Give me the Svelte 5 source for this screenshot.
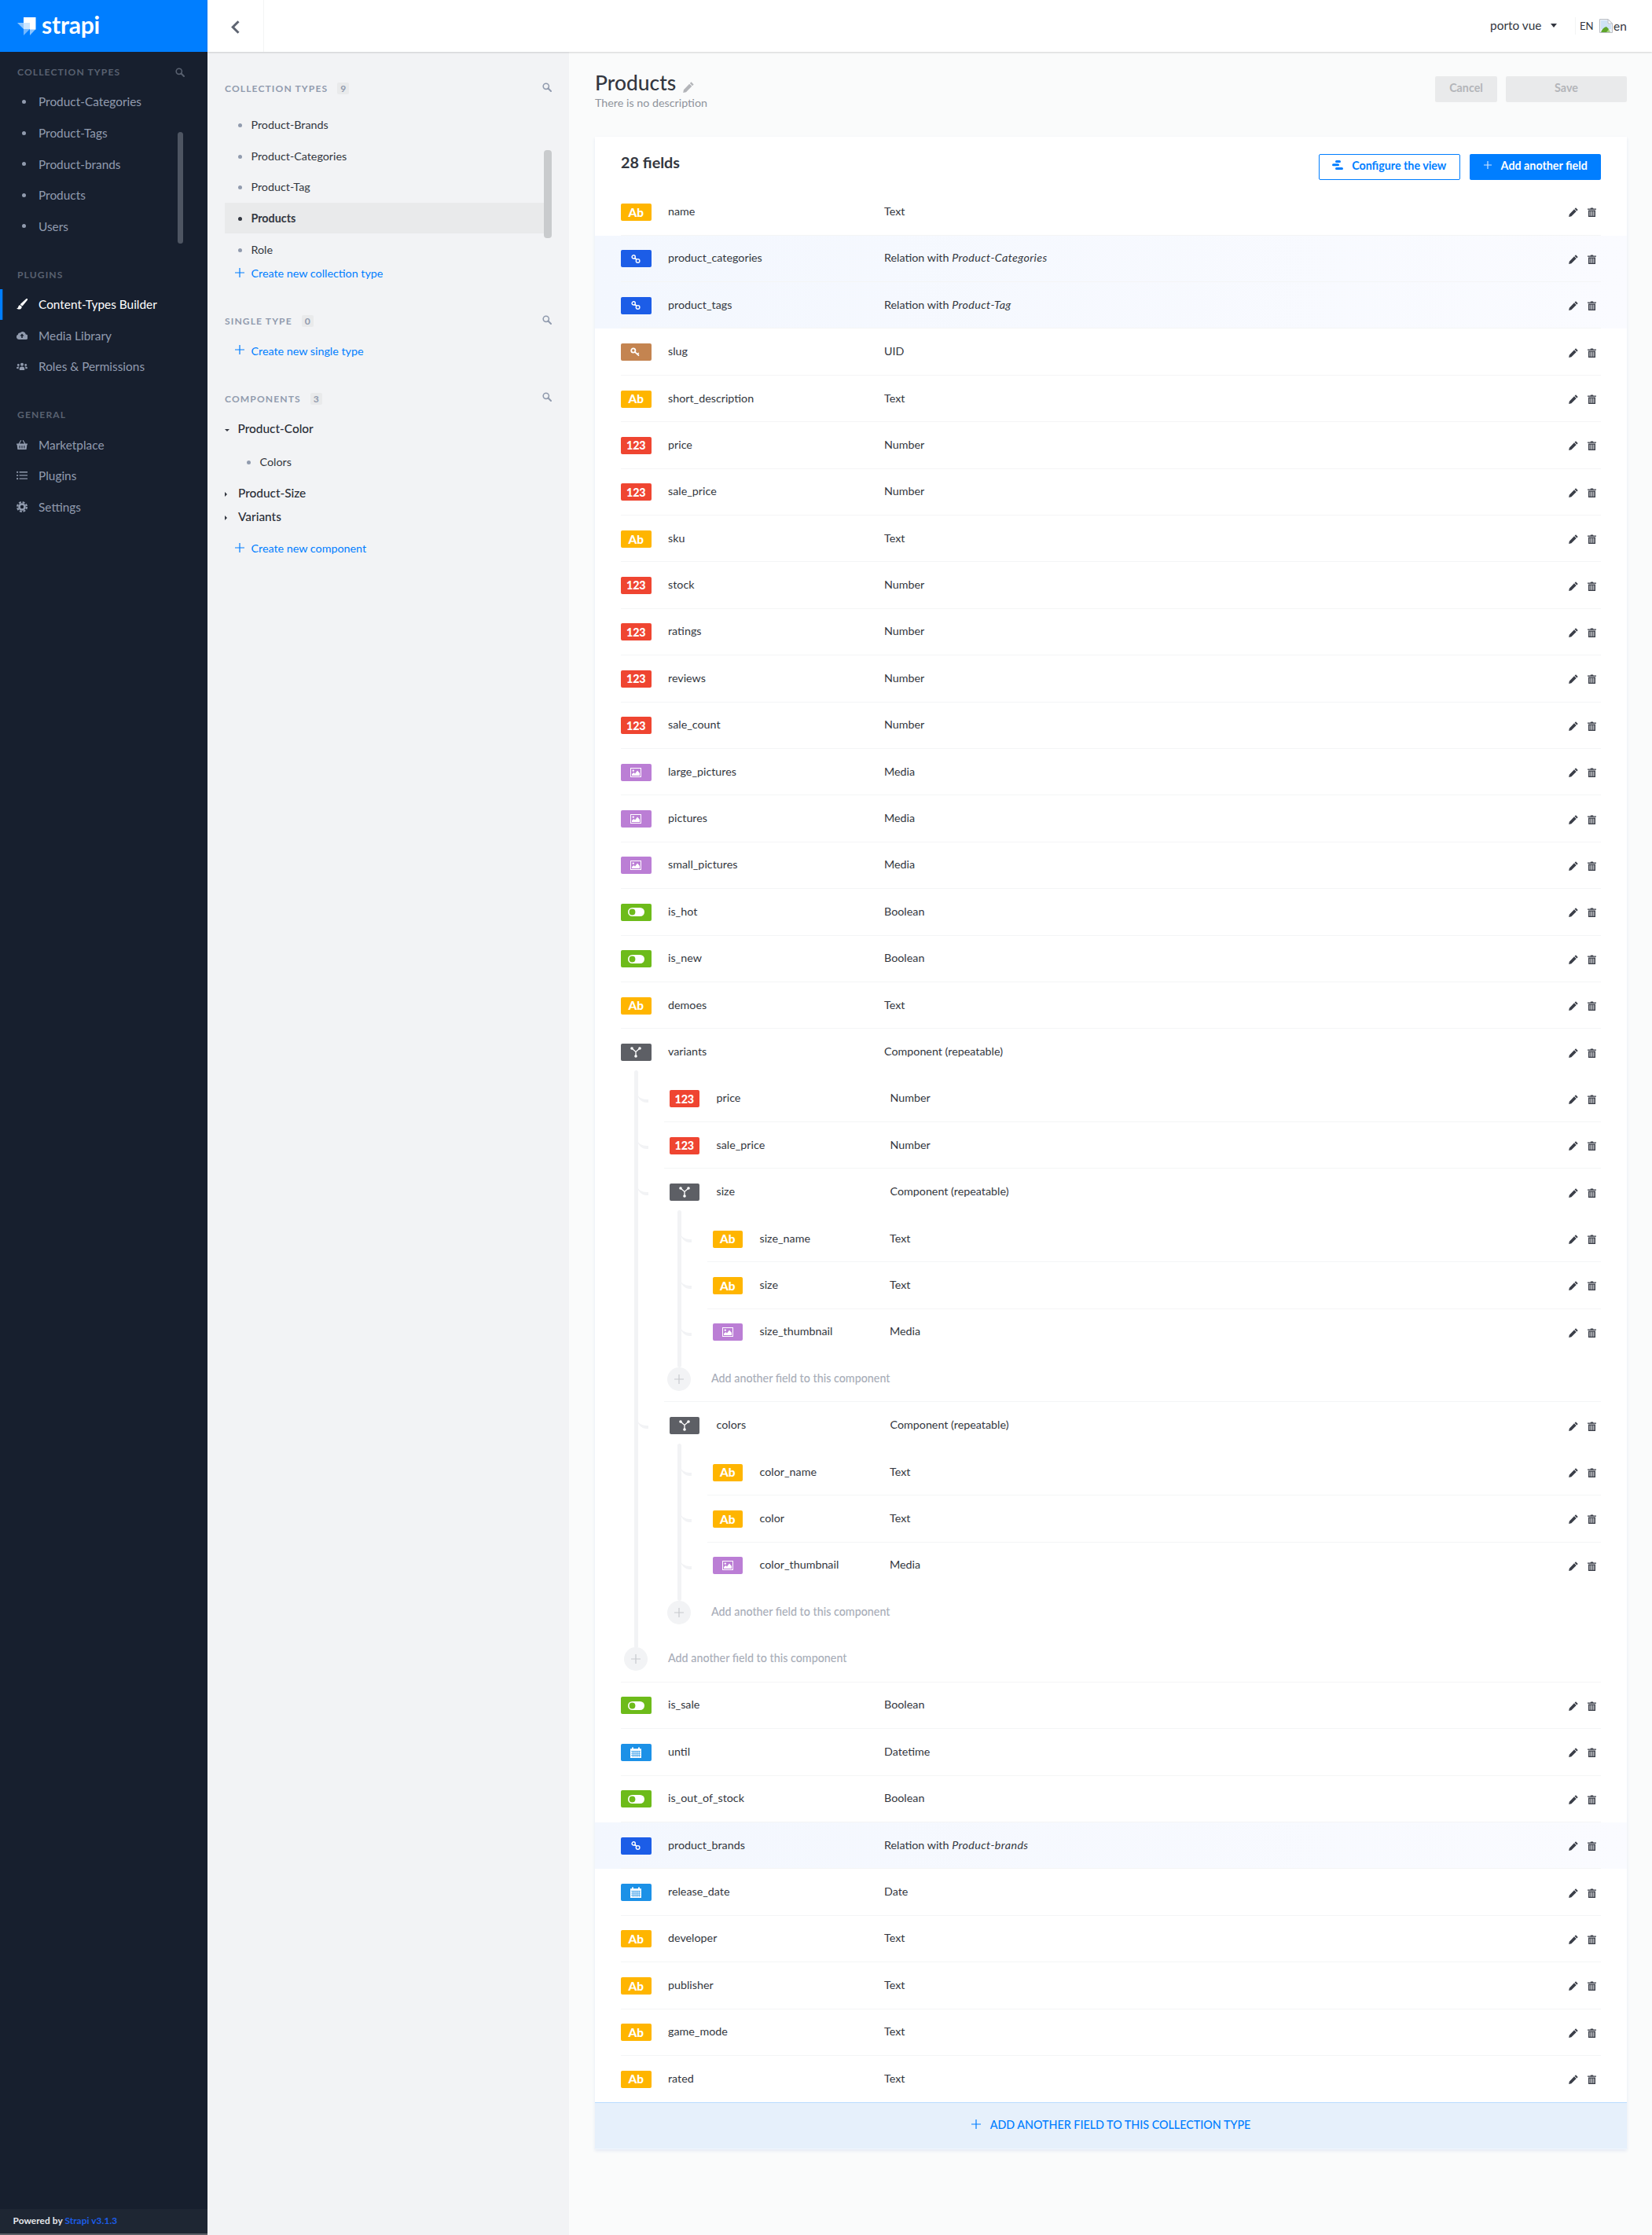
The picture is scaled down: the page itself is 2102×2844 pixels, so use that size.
<script>
  const t = (name, type) => ({ name, type, kind: 'text' });
  const num = (name) => ({ name, type: 'Number', kind: 'number' });
  const media = (name) => ({ name, type: 'Media', kind: 'media' });
  const bool = (name) => ({ name, type: 'Boolean', kind: 'bool' });
  const rel = (name, target) => ({ name, type: 'Relation with', target, kind: 'relation' });
  const txt = (name) => t(name, 'Text');

  const fields = [
    txt('name'),
    rel('product_categories', 'Product-Categories'),
    rel('product_tags', 'Product-Tag'),
    { name: 'slug', type: 'UID', kind: 'uid' },
    txt('short_description'),
    num('price'),
    num('sale_price'),
    txt('sku'),
    num('stock'),
    num('ratings'),
    num('reviews'),
    num('sale_count'),
    media('large_pictures'),
    media('pictures'),
    media('small_pictures'),
    bool('is_hot'),
    bool('is_new'),
    txt('demoes'),
    {
      name: 'variants', type: 'Component (repeatable)', kind: 'component',
      children: [
        num('price'),
        num('sale_price'),
        {
          name: 'size', type: 'Component (repeatable)', kind: 'component',
          children: [txt('size_name'), txt('size'), media('size_thumbnail')],
        },
        {
          name: 'colors', type: 'Component (repeatable)', kind: 'component',
          children: [txt('color_name'), txt('color'), media('color_thumbnail')],
        },
      ],
    },
    bool('is_sale'),
    { name: 'until', type: 'Datetime', kind: 'date' },
    bool('is_out_of_stock'),
    rel('product_brands', 'Product-brands'),
    { name: 'release_date', type: 'Date', kind: 'date' },
    txt('developer'),
    txt('publisher'),
    txt('game_mode'),
    txt('rated'),
  ];

  const collectionLinks = ['Product-Categories', 'Product-Tags', 'Product-brands', 'Products', 'Users'];
  const navTypes = ['Product-Brands', 'Product-Categories', 'Product-Tag', 'Products', 'Role'];
</script>

{#snippet search(cls)}
  <svg class={cls} viewBox="0 0 12 12" fill="none" stroke="currentColor">
    <circle cx="4.8" cy="4.8" r="3.6" stroke-width="1.6" />
    <path d="M7.5 7.5 11 11" stroke-width="2" stroke-linecap="round" />
  </svg>
{/snippet}

{#snippet plus()}
  <svg class="plus" viewBox="0 0 12 12" stroke="currentColor" stroke-width="1.2"><path d="M6 0v12M0 6h12" /></svg>
{/snippet}

{#snippet badgeIcon(kind)}
  {#if kind === 'text'}
    <span class="badge-text">Ab</span>
  {:else if kind === 'number'}
    <span class="badge-text num">123</span>
  {:else if kind === 'relation'}
    <svg width="12" height="11" viewBox="0 0 12 11" fill="none" stroke="#fff" stroke-width="1.4">
      <circle cx="3.2" cy="2.9" r="2.1" />
      <circle cx="8.6" cy="7.9" r="2.3" />
      <path d="M4.6 4.3 7 6.4" stroke-width="1.8" />
    </svg>
  {:else if kind === 'uid'}
    <svg width="14" height="12" viewBox="0 0 14 12" fill="none" stroke="#fff">
      <circle cx="3.8" cy="4" r="2.6" stroke-width="1.8" />
      <path d="M5.8 5.8 11 10.6M9 8.8l1.8-1.6" stroke-width="1.7" />
    </svg>
  {:else if kind === 'media'}
    <svg width="14" height="12" viewBox="0 0 14 12">
      <rect x=".5" y=".5" width="13" height="11" fill="none" stroke="#fff" />
      <circle cx="3.8" cy="3.6" r="1.2" fill="#fff" />
      <path d="M2 10V8l2.4-2 1.6 1.4L9 3.4 12 7v3z" fill="#fff" />
    </svg>
  {:else if kind === 'bool'}
    <svg width="21" height="11" viewBox="0 0 21 11">
      <rect width="21" height="11" rx="5.5" fill="#fff" />
      <circle cx="5.5" cy="5.5" r="3.9" fill="#6dbb1a" />
    </svg>
  {:else if kind === 'date'}
    <svg width="14" height="14" viewBox="0 0 14 14">
      <path d="M0 2.2h14V14H0z" fill="#fff" />
      <path d="M3 .5v3M11 .5v3" stroke="#fff" stroke-width="2" />
      <path d="M1 5.4h12M1 8h12M1 10.6h12M3.4 5v8M6 5v8M8.6 5v8M11.2 5v8" stroke="#1c91e7" stroke-width=".7" />
    </svg>
  {:else if kind === 'component'}
    <svg width="14" height="14" viewBox="0 0 14 14" fill="#fff">
      <circle cx="2" cy="2" r="1.8" />
      <circle cx="12" cy="2" r="1.8" />
      <circle cx="7" cy="12" r="1.8" />
      <path d="M2 2 7 6.5 12 2M7 6.5V12" fill="none" stroke="#fff" stroke-width="1.3" />
    </svg>
  {/if}
{/snippet}

{#snippet fieldList(items, level)}
  {#each items as f, i}
    {@const last = i === items.length - 1}
    <div class="row level-{level}" class:relation={f.kind === 'relation'} class:nosep={f.children || last}>
      <div class="badge {f.kind}">{@render badgeIcon(f.kind)}</div>
      <span class="fname">{f.name}</span>
      <span class="ftype">{f.type}{#if f.target}&nbsp;<em>{f.target}</em>{/if}</span>
      <span class="actions">
        <svg width="12" height="12" viewBox="0 0 12 12" fill="#3b3f49"><path d="M9 .3 11.7 3l-1.4 1.4-2.7-2.7zM7 2.3 9.7 5 3.4 11.3.2 12l.6-3.3z" /></svg>
        <svg width="11" height="12" viewBox="0 0 11 12" fill="#3b3f49"><path d="M0 1.5h3.6L4 .4h3l.4 1.1H11v1.2H0zM1 3.4h9V12H1zm1.6 1.4v5.9h1V4.8zm2.4 0v5.9h1V4.8zm2.4 0v5.9h1V4.8z" fill-rule="evenodd" /></svg>
      </span>
    </div>
    {#if f.children}
      <div class="nest nest-{level + 1}">
        {@render fieldList(f.children, level + 1)}
        <div class="add-row" class:nosep={level === 1 && last}>
          <span class="add-circle"><svg viewBox="0 0 12 12" stroke="#c6c9ce" stroke-width="1.2"><path d="M6 0v12M0 6h12" /></svg></span>
          <span>Add another field to this component</span>
        </div>
      </div>
    {/if}
  {/each}
{/snippet}

<div class="app">
  <aside class="side">
    <div class="brand">
      <svg width="24" height="24" viewBox="0 0 24 24">
        <path d="M8 1h15.5v15.5H16V8H8z" fill="#fff" />
        <path d="M0 8h8v8z" fill="#fff" opacity=".55" />
        <path d="M8 8h8v8H8z" fill="#fff" opacity=".8" />
        <path d="M8 16h8l-8 8z" fill="#fff" opacity=".45" />
        <path d="M16 16h7.5L16 24z" fill="#fff" opacity=".55" />
      </svg>
      <span class="brand-name">strapi</span>
    </div>

    <div class="side-head first">Collection Types {@render search('side-search')}</div>
    <ul class="side-list">
      {#each collectionLinks as l}
        <li><span class="side-ic"><i class="side-dot"></i></span>{l}</li>
      {/each}
      <li class="side-thumb"></li>
    </ul>

    <div class="side-head">Plugins</div>
    <ul class="side-list">
      <li class="active">
        <span class="side-ic">
          <svg width="14" height="14" viewBox="0 0 14 14" fill="#fff"><path d="M14 .3c-.6-.5-1.400-.4-2 .1L5.400 6.600c-.3.3-.5.7-.6 1l2.300 2c.3-.1.7-.3.9-.6L13.700 2c.5-.5.7-1.200.3-1.700zM4.300 8.300C2.700 8.500 2.500 10 2 11.200c-.3.7-1.200 1-2 1.100 1.200 1.200 4 1.900 5.500.6 1-.8 1.300-1.900 1.100-2.800z" /></svg>
        </span>
        Content-Types Builder
      </li>
      <li>
        <span class="side-ic">
          <svg width="14" height="11" viewBox="0 0 14 11" fill="#919bae"><path fill-rule="evenodd" d="M3.200 11A3.200 3.200 0 0 1 2 4.800a2 2 0 0 1 2.700-2.200A4 4 0 0 1 11.800 4.600 3.200 3.200 0 0 1 11 11zM7 3.500 4.400 6.400h1.800V9h1.600V6.400h1.800z" /></svg>
        </span>
        Media Library
      </li>
      <li>
        <span class="side-ic">
          <svg width="14" height="10" viewBox="0 0 14 10" fill="#919bae"><circle cx="7" cy="2.800" r="2" /><circle cx="2.300" cy="3.500" r="1.400" /><circle cx="11.700" cy="3.500" r="1.400" /><path d="M3.800 10V7.800C3.800 6.300 5 5.400 7 5.400s3.200.9 3.200 2.400V10zM0 7.800C0 6.200.9 5.400 2.300 5.400c.5 0 .8.100 1.100.2-.5.500-.8 1.200-.8 2v.9zM14 7.800c0-1.600-.9-2.400-2.300-2.400-.5 0-.8.100-1.100.2.500.5.800 1.200.8 2v.9z" /></svg>
        </span>
        Roles &amp; Permissions
      </li>
    </ul>

    <div class="side-head">General</div>
    <ul class="side-list">
      <li>
        <span class="side-ic">
          <svg width="14" height="12" viewBox="0 0 14 12" fill="#919bae"><path fill-rule="evenodd" d="M0 4.500h2.600L5.300 0l1 .6-2.300 3.900h6L7.700.6l1-.6 2.700 4.500H14v1.200h-.6L12.600 12H1.400L.6 5.700H0zM3.600 7v3.600h1V7zm2.900 0v3.600h1V7zm2.900 0v3.600h1V7z" /></svg>
        </span>
        Marketplace
      </li>
      <li>
        <span class="side-ic">
          <svg width="14" height="12" viewBox="0 0 14 12" fill="#919bae"><circle cx="1.100" cy="1.800" r="1.100" /><circle cx="1.100" cy="6" r="1.100" /><circle cx="1.100" cy="10.200" r="1.100" /><path d="M3.600 1.100H14v1.300H3.600zM3.600 5.300H14v1.300H3.600zM3.600 9.500H14v1.300H3.600z" /></svg>
        </span>
        Plugins
      </li>
      <li>
        <span class="side-ic">
          <svg width="14" height="14" viewBox="0 0 14 14" fill="none"><circle cx="7" cy="7" r="5.900" stroke="#919bae" stroke-width="2.200" stroke-dasharray="2.800 1.830" /><circle cx="7" cy="7" r="3.500" stroke="#919bae" stroke-width="2.600" /></svg>
        </span>
        Settings
      </li>
    </ul>

    <div class="powered">Powered by <span>Strapi v3.1.3</span></div>
  </aside>

  <div class="page">
    <header class="topbar">
      <div class="back">
        <svg width="11" height="17" viewBox="0 0 11 17" fill="none" stroke="#5e6572" stroke-width="3"><path d="M9.500 1.200 2.200 8.500l7.300 7.300" /></svg>
      </div>
      <div class="user">porto vue <i class="caret"></i></div>
      <div class="lang">
        <span class="lang-code">EN</span>
        <span class="broken">
          <svg width="17" height="18" viewBox="0 0 17 18">
            <path d="M.5.500h10.500l5.500 5.500v11.500H.5z" fill="#eef3fa" stroke="#b9bdc4" />
            <path d="M2 2h8.500v5H15v6H2z" fill="#cfe2f6" />
            <path d="M11 .500v5.500h5.500z" fill="#fff" stroke="#b9bdc4" />
            <path d="M2 17c1.500-4 4-6.500 7-7l3 3-1 4z" fill="#5fa52b" />
            <path d="M9 17l3-4 2 4z" fill="#a5cf7d" />
          </svg>
          en
        </span>
      </div>
    </header>

    <div class="body">
      <nav class="ctb">
        <section class="ctb-sec first">
          <div class="ctb-head">
            <span class="ctb-title">Collection Types</span><span class="count">9</span>
            {@render search('ctb-search')}
          </div>
          <ul class="ctb-list">
            {#each navTypes as n}
              <li class:current={n === 'Products'}><i class="dot"></i>{n}</li>
            {/each}
            <li class="ctb-thumb"></li>
          </ul>
          <div class="create">{@render plus()}Create new collection type</div>
        </section>

        <section class="ctb-sec">
          <div class="ctb-head">
            <span class="ctb-title">Single Type</span><span class="count">0</span>
            {@render search('ctb-search')}
          </div>
          <div class="create after-head">{@render plus()}Create new single type</div>
        </section>

        <section class="ctb-sec">
          <div class="ctb-head">
            <span class="ctb-title">Components</span><span class="count">3</span>
            {@render search('ctb-search')}
          </div>
          <div class="tree-node open"><i class="arrow down"></i>Product-Color</div>
          <div class="tree-leaf"><i class="dot"></i>Colors</div>
          <div class="tree-node second"><i class="arrow"></i>Product-Size</div>
          <div class="tree-node third"><i class="arrow"></i>Variants</div>
          <div class="create after-tree">{@render plus()}Create new component</div>
        </section>
      </nav>

      <main class="main">
        <div class="title-row">
          <div>
            <h1>Products
              <svg width="14" height="14" viewBox="0 0 12 12" fill="#b3b5b9"><path d="M9 .3 11.700 3l-1.400 1.400-2.700-2.700zM7 2.300 9.700 5 3.400 11.300.2 12l.6-3.300z" /></svg>
            </h1>
            <p>There is no description</p>
          </div>
          <div class="title-btns">
            <button class="btn-off cancel">Cancel</button>
            <button class="btn-off save">Save</button>
          </div>
        </div>

        <div class="card">
          <div class="card-head">
            <h2>28 fields</h2>
            <div class="head-btns">
              <button class="btn-line">
                <svg width="14" height="13" viewBox="0 0 14 13" fill="#007eff"><rect x="4" y="0" width="7" height="3" rx="1.500" /><rect x="0" y="4.200" width="9" height="3" rx="1.500" /><rect x="4" y="9" width="10" height="3" rx="1.500" /></svg>
                Configure the view
              </button>
              <button class="btn-blue">
                <svg class="plus" viewBox="0 0 12 12" stroke="#cfe5ff" stroke-width="1.200"><path d="M6 1v10M1 6h10" /></svg>
                Add another field
              </button>
            </div>
          </div>

          <div class="rows">
            {@render fieldList(fields, 0)}
          </div>

          <div class="card-foot">
            <svg class="plus" viewBox="0 0 12 12" stroke="currentColor" stroke-width="1.200"><path d="M6 0v12M0 6h12" /></svg>
            Add another field to this collection type
          </div>
        </div>
      </main>
    </div>
  </div>
</div>

<style>
  :global(body) {
    margin: 0;
    font-family: 'Lato', 'Open Sans', sans-serif;
    font-size: 14.3px;
    color: #333740;
  }

  ul { list-style: none; margin: 0; padding: 0; }
  button { font-family: inherit; border: 0; padding: 0; }

  .app {
    display: flex;
    min-height: 2844px;
  }

  /* left menu */
  .side {
    width: 264px;
    flex: none;
    background: #171f2e;
    display: flex;
    flex-direction: column;
    color: #919bae;
  }

  .brand {
    height: 66px;
    background: #007eff;
    display: flex;
    align-items: center;
    gap: 7px;
    padding-left: 22px;
    box-sizing: border-box;
  }

  .brand-name {
    color: #fff;
    font-size: 30px;
    font-weight: 700;
    line-height: 1;
    margin-top: -4px;
    letter-spacing: -0.2px;
  }

  .side-head {
    position: relative;
    height: 20px;
    line-height: 20px;
    margin: 31.5px 22px 0;
    font-size: 12.1px;
    font-weight: 700;
    letter-spacing: 1.1px;
    text-transform: uppercase;
    color: #596170;
  }

  .side-head.first { margin-top: 16px; }

  .side-search {
    position: absolute;
    right: 7px;
    top: 4px;
    width: 12px;
    height: 12px;
    color: #596170;
  }

  .side-list {
    position: relative;
    margin-top: 8.2px;
  }

  .side-list li {
    height: 39.6px;
    display: flex;
    align-items: center;
    font-size: 15.4px;
    padding-bottom: 1px;
    box-sizing: border-box;
  }

  .side-list li.active {
    color: #fff;
    box-shadow: inset 3.3px 0 0 #007eff;
  }

  .side-ic {
    width: 49px;
    flex: none;
    padding-left: 21px;
    box-sizing: border-box;
    display: flex;
    align-items: center;
  }

  .side-dot {
    width: 5px;
    height: 5px;
    border-radius: 50%;
    background: #919bae;
    margin-left: 6.5px;
  }

  .side-list li.side-thumb {
    position: absolute;
    left: 225.5px;
    top: 58px;
    width: 7.5px;
    height: 142px;
    padding: 0;
    border-radius: 4px;
    background: #4e5562;
  }

  .powered {
    margin-top: auto;
    height: 31px;
    line-height: 30px;
    padding-left: 16.5px;
    background: #1e2633;
    border-bottom: 2px solid #5b5f66;
    font-size: 11.8px;
    font-weight: 700;
    color: #e6e8ec;
    letter-spacing: 0.1px;
  }

  .powered span { color: #1c5de7; }

  /* top bar */
  .page {
    flex: 1;
    min-width: 0;
    display: flex;
    flex-direction: column;
  }

  .topbar {
    height: 66px;
    box-sizing: border-box;
    background: #fff;
    box-shadow: 0 1px 2px rgba(0, 0, 0, 0.16);
    display: flex;
    align-items: center;
    position: relative;
  }

  .back {
    width: 71px;
    height: 66px;
    border-right: 1px solid #f3f4f4;
    display: flex;
    align-items: center;
    justify-content: center;
    margin-right: auto;
  }

  .back svg { margin-left: -1px; margin-top: 2px; }

  .user {
    display: flex;
    align-items: center;
    gap: 11px;
    font-size: 15.4px;
    margin-right: 23.5px;
    margin-top: -2px;
  }

  .caret {
    width: 0;
    height: 0;
    border-left: 4.8px solid transparent;
    border-right: 4.8px solid transparent;
    border-top: 5.2px solid #333740;
  }

  .lang {
    display: flex;
    align-items: center;
    height: 22px;
    border-left: 1px solid #f3f4f4;
    padding-left: 5px;
    width: 98px;
    box-sizing: border-box;
    margin-top: -1px;
  }

  .lang-code {
    font-size: 13.2px;
    width: 25px;
  }

  .broken {
    display: inline-flex;
    align-items: flex-end;
    gap: 1px;
    font-size: 15.4px;
    line-height: 18px;
    margin-top: 1px;
  }

  /* content types nav */
  .body {
    flex: 1;
    display: flex;
  }

  .ctb {
    width: 460px;
    flex: none;
    box-sizing: border-box;
    background: #f2f3f5;
    padding: 36.5px 22px 0;
  }

  .ctb-sec { margin-top: 40px; }
  .ctb-sec.first { margin-top: 0; }

  .ctb-head {
    position: relative;
    height: 20px;
    display: flex;
    align-items: center;
  }

  .ctb-title {
    font-size: 12.1px;
    font-weight: 700;
    letter-spacing: 1.1px;
    text-transform: uppercase;
    color: #919bae;
  }

  .count {
    margin-left: 12px;
    min-width: 15px;
    height: 15px;
    line-height: 15px;
    text-align: center;
    background: #e9eaeb;
    border-radius: 2px;
    font-size: 12.1px;
    font-weight: 700;
    color: #919bae;
  }

  .ctb-search {
    position: absolute;
    right: 0;
    top: 2px;
    width: 12px;
    height: 12px;
    color: #919bae;
  }

  .ctb-list {
    position: relative;
    margin-top: 16.5px;
  }

  .ctb-list li {
    height: 39.6px;
    width: 406px;
    display: flex;
    align-items: center;
    padding-left: 16.5px;
    box-sizing: border-box;
  }

  .ctb-list li.current {
    background: #e9eaeb;
    font-weight: 700;
  }

  .ctb-list li.current .dot { background: #333740; }

  .dot {
    width: 5px;
    height: 5px;
    border-radius: 50%;
    background: #919bae;
    margin-right: 12px;
    margin-top: 2px;
    flex: none;
  }

  .ctb-list li.ctb-thumb {
    position: absolute;
    left: 406px;
    top: 52px;
    width: 10px;
    height: 112px;
    padding: 0;
    border-radius: 4px;
    background: #c9cbcd;
  }

  .create {
    display: flex;
    align-items: center;
    height: 22px;
    padding-left: 13px;
    color: #007eff;
  }

  .create.after-head { margin-top: 16.5px; }
  .create.after-tree { margin-top: 17.5px; }

  .plus {
    width: 12px;
    height: 12px;
    flex: none;
    margin-right: 8.5px;
    margin-top: -2px;
  }

  .tree-node {
    display: flex;
    align-items: center;
    height: 24px;
    font-size: 15.4px;
    font-weight: 500;
    margin-top: 16px;
    color: #2a2e37;
  }

  .tree-node.second { margin-top: 7.5px; }
  .tree-node.third { margin-top: 6px; }

  .tree-leaf {
    display: flex;
    align-items: center;
    height: 39.6px;
    margin-top: 10.5px;
    padding-left: 27.5px;
  }

  .arrow {
    width: 0;
    height: 0;
    flex: none;
    margin: 4px 11.5px 0 0;
    border-top: 3.2px solid transparent;
    border-bottom: 3.2px solid transparent;
    border-left: 3.5px solid #333740;
    padding-right: 2.5px;
    box-sizing: content-box;
    background-clip: padding-box;
  }

  .arrow.down {
    border-left: 3.2px solid transparent;
    border-right: 3.2px solid transparent;
    border-top: 3.5px solid #333740;
    border-bottom: 0;
    padding-right: 0;
    margin-right: 10.6px;
  }

  /* main */
  .main {
    flex: 1;
    min-width: 0;
    background: #fafbfb;
    padding: 0 32px 0 33px;
  }

  .title-row {
    display: flex;
    justify-content: space-between;
    height: 107.7px;
  }

  h1 {
    margin: 22px 0 0;
    font-size: 26.4px;
    line-height: 34px;
    font-weight: 500;
    color: #333740;
  }

  h1 svg { margin-left: 2px; vertical-align: -3px; }

  .title-row p {
    margin: 0;
    line-height: 18px;
    color: #8f949c;
  }

  .title-btns {
    display: flex;
    gap: 11px;
    padding-top: 31px;
  }

  .btn-off {
    height: 33px;
    background: #e9eaeb;
    border-radius: 2px;
    color: #b3b5b9;
    font-size: 14.3px;
    font-weight: 700;
    padding-bottom: 5px;
  }

  .cancel { width: 79px; }
  .save { width: 154px; }

  .card {
    background: #fff;
    box-shadow: 0 2px 4px #e3e9f3;
  }

  .card-head {
    height: 66.6px;
    box-sizing: border-box;
    padding: 22.3px 33px 0;
    display: flex;
    justify-content: space-between;
  }

  h2 {
    margin: -1.5px 0 0;
    font-size: 19.8px;
    line-height: 24px;
    font-weight: 700;
    color: #333740;
  }

  .head-btns {
    display: flex;
    gap: 11.5px;
  }

  .btn-line, .btn-blue {
    height: 33px;
    display: flex;
    align-items: center;
    justify-content: center;
    border-radius: 2px;
    font-size: 14.3px;
    font-weight: 700;
    padding-bottom: 4px;
    box-sizing: border-box;
  }

  .btn-line {
    width: 180.5px;
    background: #fff;
    border: 1px solid #007eff;
    color: #007eff;
    gap: 11px;
  }

  .btn-blue {
    width: 167.5px;
    background: #007eff;
    color: #fff;
  }

  .btn-blue .plus { margin: 0 11px 0 0; }

  /* field rows */
  .row {
    display: flex;
    align-items: center;
    height: 59.4px;
    box-sizing: border-box;
    position: relative;
  }

  .row.level-0 { padding: 0 33px; }
  .row.level-1, .row.level-2 { padding-left: 6.5px; padding-right: 33px; }

  .row::after {
    content: '';
    position: absolute;
    left: 0;
    right: 33px;
    bottom: 0;
    height: 1px;
    background: #f4f5f6;
  }

  .row.level-0::after { left: 33px; }
  .row.nosep::after { display: none; }

  .row.relation {
    background: linear-gradient(90deg, #f3f7fe, #fafbff);
  }

  .badge {
    width: 38.5px;
    height: 22px;
    flex: none;
    border-radius: 2px;
    display: flex;
    align-items: center;
    justify-content: center;
  }

  .badge.text { background: #ffb500; }
  .badge.number { background: #ef4531; }
  .badge.relation { background: #1c5de7; }
  .badge.uid { background: #c48450; }
  .badge.media { background: #bb7ed5; }
  .badge.bool { background: #6dbb1a; }
  .badge.date { background: #1c91e7; }
  .badge.component { background: #5d5f65; }

  .badge-text {
    color: #fff;
    font-weight: 900;
    font-size: 15.4px;
    line-height: 1;
    margin-top: 1px;
  }

  .badge-text.num { font-size: 14.3px; letter-spacing: -0.2px; }

  .fname {
    margin-left: 21.5px;
    margin-top: -3px;
    flex: none;
  }

  .level-0 .fname { width: 275px; }
  .level-1 .fname { width: 221px; }
  .level-2 .fname { width: 165.5px; }

  .ftype { margin-top: -3px; }
  .ftype em { font-style: italic; letter-spacing: 0.4px; }

  .actions {
    margin-left: auto;
    display: flex;
    align-items: center;
    gap: 12px;
    padding-right: 6.5px;
    margin-top: 1px;
  }

  /* nested components */
  .nest { position: relative; }
  .nest-1 { margin-left: 88px; }
  .nest-2 { margin-left: 55px; }

  .nest::before {
    content: '';
    position: absolute;
    top: -6.5px;
    bottom: 44px;
    left: -38.5px;
    width: 5px;
    border-radius: 3px;
    background: #f2f3f5;
  }

  .nest > .row::before {
    content: '';
    position: absolute;
    left: -34px;
    top: 20px;
    width: 14px;
    height: 14px;
    border-bottom: 4px solid #f2f3f5;
    border-bottom-left-radius: 12px;
    box-sizing: border-box;
  }

  .add-row {
    position: relative;
    height: 59.4px;
    display: flex;
    align-items: center;
    padding-left: 5px;
    color: #a8adb8;
    font-weight: 500;
  }

  .add-row span:last-child { margin-top: -3px; }

  .add-circle {
    position: absolute;
    left: -51px;
    top: 14.7px;
    width: 30px;
    height: 30px;
    border-radius: 50%;
    background: #f2f3f5;
    display: flex;
    align-items: center;
    justify-content: center;
  }

  .add-circle svg { width: 12px; height: 12px; }

  .add-row::after {
    content: '';
    position: absolute;
    left: -55px;
    right: 33px;
    bottom: 0;
    height: 1px;
    background: #f4f5f6;
  }

  .add-row.nosep::after { display: none; }

  .card-foot {
    height: 59.4px;
    box-sizing: border-box;
    background: #e6f0fb;
    border-top: 1px solid #b9dcff;
    border-bottom: 1px solid #f0f6fd;
    display: flex;
    align-items: center;
    justify-content: center;
    color: #007eff;
    font-weight: 500;
    text-transform: uppercase;
    padding-bottom: 3px;
  }

  .card-foot .plus {
    margin-right: 12px;
    margin-top: 0;
  }
</style>
